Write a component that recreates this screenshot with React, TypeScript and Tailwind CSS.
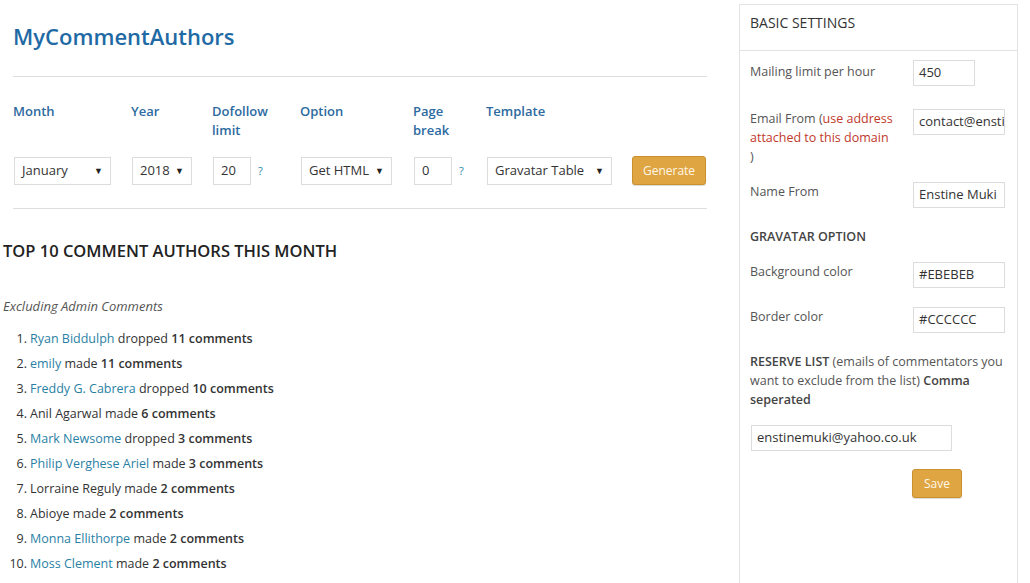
import React from 'react';

const font = { fontFamily: '"Open Sans", "Noto Sans", sans-serif' };

type Author = { name: string; link: boolean; verb: string; count: number };

const authors: Author[] = [
  { name: 'Ryan Biddulph', link: true, verb: 'dropped', count: 11 },
  { name: 'emily', link: true, verb: 'made', count: 11 },
  { name: 'Freddy G. Cabrera', link: true, verb: 'dropped', count: 10 },
  { name: 'Anil Agarwal', link: false, verb: 'made', count: 6 },
  { name: 'Mark Newsome', link: true, verb: 'dropped', count: 3 },
  { name: 'Philip Verghese Ariel', link: true, verb: 'made', count: 3 },
  { name: 'Lorraine Reguly', link: false, verb: 'made', count: 2 },
  { name: 'Abioye', link: false, verb: 'made', count: 2 },
  { name: 'Monna Ellithorpe', link: true, verb: 'made', count: 2 },
  { name: 'Moss Clement', link: true, verb: 'made', count: 2 },
];

const FakeSelect = ({ value, width }: { value: string; width: string }) => (
  <div className={`${width} h-[28px] ml-px flex items-center justify-between border border-[#dcdcdc] bg-white pl-[7px] pr-[7px] text-[13px] text-[#333]`}>
    <span>{value}</span>
    <span className="text-[9px] text-[#222]">▼</span>
  </div>
);

const SmallInput = ({ value }: { value: string }) => (
  <div className="flex items-center">
    <div className="w-[38px] h-[28px] ml-px flex items-center border border-[#dcdcdc] bg-white pl-[7px] text-[13px] text-[#333]">
      {value}
    </div>
    <span className="ml-[7px] mt-[2px] text-[11px] text-[#2a8aa8]">?</span>
  </div>
);

const Label = ({ children }: { children: React.ReactNode }) => (
  <div className="text-[13px] leading-[19px] font-semibold text-[#2c6aa0]">{children}</div>
);

const SettingInput = ({ value, width = 'w-[92px]' }: { value: string; width?: string }) => (
  <div className={`${width} h-[26px] shrink-0 flex items-center border border-[#dcdcdc] bg-white pl-[5px] text-[13px] text-[#333] overflow-hidden whitespace-nowrap`}>
    {value}
  </div>
);

export default function App() {
  return (
    <div className="w-[1030px] h-[583px] overflow-hidden bg-white flex" style={font}>
      {/* main column */}
      <div className="w-[739px] shrink-0 pl-[3px]">
        <div className="ml-[10px] w-[694px]">
          <h1 className="pt-[21px] text-[22px] leading-[30px] font-semibold text-[#1f6aa5]">MyCommentAuthors</h1>
          <div className="mt-[25px] h-px bg-[#dedede]" />

          <div className="mt-[25px] flex">
            <div className="w-[118px]">
              <Label>Month</Label>
            </div>
            <div className="w-[81px]">
              <Label>Year</Label>
            </div>
            <div className="w-[88px]">
              <Label>
                Dofollow
                <br />
                limit
              </Label>
            </div>
            <div className="w-[113px]">
              <Label>Option</Label>
            </div>
            <div className="w-[73px]">
              <Label>
                Page
                <br />
                break
              </Label>
            </div>
            <div className="w-[146px]">
              <Label>Template</Label>
            </div>
          </div>

          <div className="mt-[16px] flex items-center">
            <div className="w-[118px]">
              <FakeSelect value="January" width="w-[97px]" />
            </div>
            <div className="w-[81px]">
              <FakeSelect value="2018" width="w-[60px]" />
            </div>
            <div className="w-[88px]">
              <SmallInput value="20" />
            </div>
            <div className="w-[113px]">
              <FakeSelect value="Get HTML" width="w-[91px]" />
            </div>
            <div className="w-[73px]">
              <SmallInput value="0" />
            </div>
            <div className="w-[146px]">
              <FakeSelect value="Gravatar Table" width="w-[125px]" />
            </div>
            <button className="w-[74px] h-[29px] rounded-[3px] border border-[#c9922f] bg-[#dfa543] text-[12px] text-[#fff7e6] shadow-[0_1px_1px_rgba(0,0,0,0.15)]">
              Generate
            </button>
          </div>

          <div className="mt-[23px] h-px bg-[#dedede]" />
        </div>

        <h2 className="mt-[31px] text-[16.5px] leading-[22px] font-semibold text-[#222]">TOP 10 COMMENT AUTHORS THIS MONTH</h2>
        <p className="mt-[35px] text-[13px] leading-[18px] italic text-[#555]">Excluding Admin Comments</p>

        <ol className="mt-[12px] text-[12.5px] text-[#333]">
          {authors.map((a, i) => (
            <li key={a.name} className="flex h-[25px] items-center">
              <span className="w-[24px] text-right">{i + 1}.</span>
              <span className="ml-[3px]">
                <span className={a.link ? 'text-[#2a7fa5]' : ''}>{a.name}</span> {a.verb}{' '}
                <span className="font-semibold">{a.count} comments</span>
              </span>
            </li>
          ))}
        </ol>
      </div>

      {/* settings panel */}
      <div className="mt-[4px] w-[279px] h-[600px] shrink-0 border border-[#e3e3e3] text-[12.5px] text-[#555]">
        <div className="h-[46px] pt-[8px] pl-[10px] border-b border-[#e3e3e3] text-[14px] leading-[20px] text-[#333]">
          BASIC SETTINGS
        </div>

        <div className="pl-[10px] pr-[6px]">
          <div className="mt-[9px] flex items-start">
            <div className="w-[163px] leading-[19px] pt-[2px]">Mailing limit per hour</div>
            <SettingInput value="450" width="w-[62px]" />
          </div>

          <div className="mt-[23px] flex items-start">
            <div className="w-[163px] leading-[19px]">
              Email From (<span className="text-[#c0392b]">use address attached to this domain</span>
              <br />)
            </div>
            <SettingInput value="contact@enstinemuki.com" />
          </div>

          <div className="mt-[16px] flex items-start">
            <div className="w-[163px] leading-[19px]">Name From</div>
            <SettingInput value="Enstine Muki" />
          </div>

          <div className="mt-[19px] font-semibold text-[#444] leading-[19px]">GRAVATAR OPTION</div>

          <div className="mt-[16px] flex items-start">
            <div className="w-[163px] leading-[19px]">Background color</div>
            <SettingInput value="#EBEBEB" />
          </div>

          <div className="mt-[19px] flex items-start">
            <div className="w-[163px] leading-[19px]">Border color</div>
            <SettingInput value="#CCCCCC" />
          </div>

          <div className="mt-[19px] leading-[19px]">
            <span className="font-semibold text-[#444]">RESERVE LIST</span> (emails of commentators you want to exclude from the list){' '}
            <span className="font-semibold text-[#444]">Comma seperated</span>
          </div>

          <div className="mt-[16px] ml-px">
            <SettingInput value="enstinemuki@yahoo.co.uk" width="w-[201px]" />
          </div>

          <div className="mt-[18px] ml-[162px]">
            <button className="w-[50px] h-[29px] rounded-[3px] border border-[#c9922f] bg-[#dfa543] text-[12px] text-[#fff7e6] shadow-[0_1px_1px_rgba(0,0,0,0.15)]">
              Save
            </button>
          </div>
        </div>
      </div>
    </div>
  );
}
